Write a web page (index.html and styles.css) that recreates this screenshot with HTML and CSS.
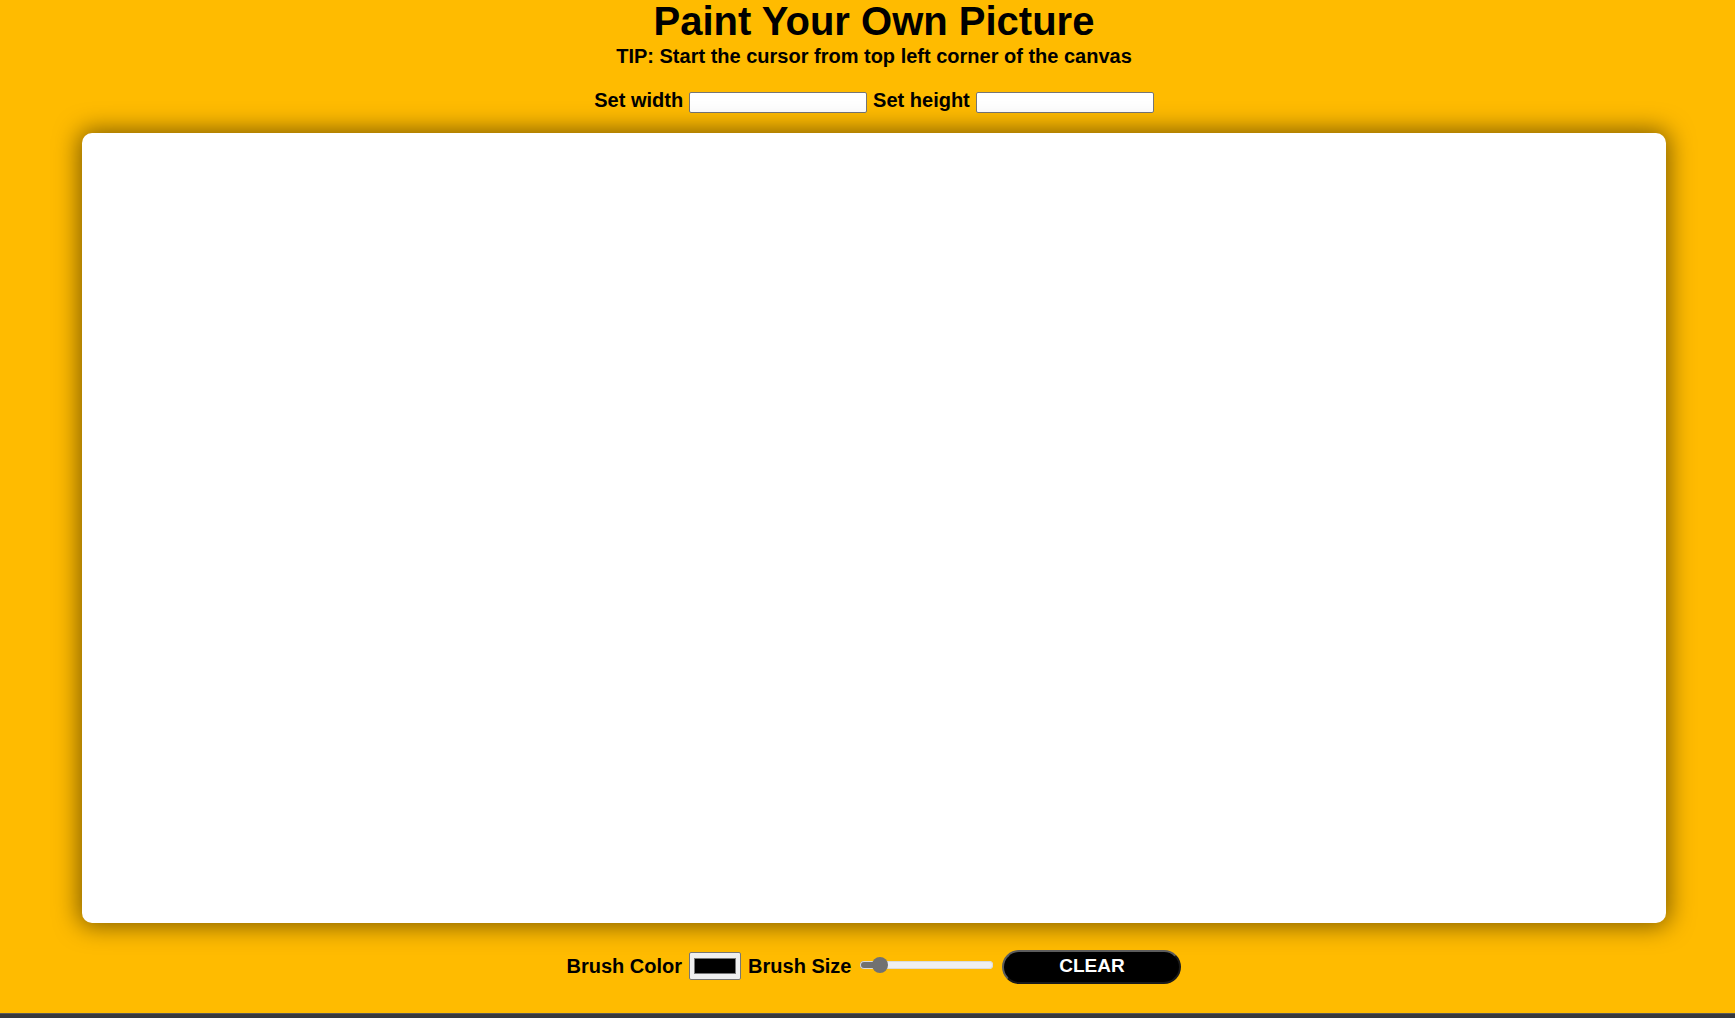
FILE: index.html
```html
<!DOCTYPE html>
<html lang="en">
<head>
<meta charset="utf-8">
<title>Paint Your Own Picture</title>
<link rel="stylesheet" href="styles.css">
</head>
<body>
<div class="page">
  <h1 class="title">Paint Your Own Picture</h1>
  <p class="tip">TIP: Start the cursor from top left corner of the canvas</p>
  <div class="size-row">
    <label class="lbl" for="w">Set width</label>
    <input class="num" id="w" type="text">
    <label class="lbl" for="h">Set height</label>
    <input class="num" id="h" type="text">
  </div>
  <canvas class="board" width="1584" height="790"></canvas>
  <div class="tool-row">
    <label class="lbl" for="c">Brush Color</label>
    <input class="color" id="c" type="color" value="#000000">
    <label class="lbl" for="s">Brush Size</label>
    <input class="range" id="s" type="range" min="1" max="40" value="5">
    <button class="clear" type="button">CLEAR</button>
  </div>
</div>
<div class="footer"></div>
</body>
</html>
```
FILE: styles.css
```css
html, body {
  margin: 0;
  padding: 0;
}
body {
  background: #37383c;
  font-family: "Liberation Sans", Arial, sans-serif;
  color: #000;
}
.page {
  background: #ffbb00;
  height: 1013px;
  padding-left: 13px;
  box-sizing: border-box;
  display: flex;
  flex-direction: column;
  align-items: center;
}
.footer {
  border-top: 1px solid #5a5a5a;
  height: 40px;
}
.title {
  margin: -2px 0 0;
  font-size: 40px;
  line-height: 46px;
  font-weight: bold;
}
.tip {
  margin: 1px 0 1px;
  font-size: 20px;
  line-height: 23px;
  font-weight: bold;
}
.lbl {
  font-size: 20px;
  line-height: 23px;
  font-weight: bold;
}
.size-row {
  margin-top: 20px;
  display: flex;
  align-items: baseline;
  gap: 6px;
}
.num {
  box-sizing: border-box;
  width: 178px;
  height: 21px;
  margin: 0;
  padding: 1px 2px;
  border: 1px solid #767676;
  border-radius: 2px;
  background: #fff;
  font-size: 13.33px;
  font-family: "Liberation Sans", Arial, sans-serif;
}
.board {
  display: block;
  margin-top: 20px;
  width: 1584px;
  height: 790px;
  background: #fff;
  border-radius: 10px;
  box-shadow: 0 0 25px 3px rgba(0, 0, 0, 0.5);
}
.tool-row {
  margin-top: 27px;
  display: flex;
  align-items: center;
  height: 34px;
}
.tool-row .lbl {
  margin-top: -2px;
}
.color {
  box-sizing: border-box;
  width: 52px;
  height: 28px;
  margin: -2px 7px 0;
  padding: 1px 2px;
  border: 1px solid #767676;
  border-radius: 2px;
  background: #efefef;
}
.range {
  -webkit-appearance: none;
  appearance: none;
  width: 133px;
  height: 16px;
  margin: -4px 9px 0;
  padding: 0;
  background: transparent;
}
.range::-webkit-slider-runnable-track {
  height: 8px;
  border-radius: 4px;
  background: linear-gradient(to right, #717171 0 20px, #efefef 20px 100%);
  box-shadow: inset 0 0 0 1px #dadada;
}
.range::-webkit-slider-thumb {
  -webkit-appearance: none;
  appearance: none;
  width: 16px;
  height: 16px;
  margin-top: -4px;
  border-radius: 50%;
  background: #717171;
  border: none;
}
.clear {
  box-sizing: border-box;
  width: 179px;
  height: 34px;
  margin: 0;
  padding: 0 0 2px;
  background: #000;
  color: #fff;
  font-family: "Liberation Sans", Arial, sans-serif;
  font-size: 19px;
  font-weight: bold;
  border: 2px solid;
  border-color: #5c5c5c #1a1a1a #1a1a1a #5c5c5c;
  border-radius: 17px;
}
```
